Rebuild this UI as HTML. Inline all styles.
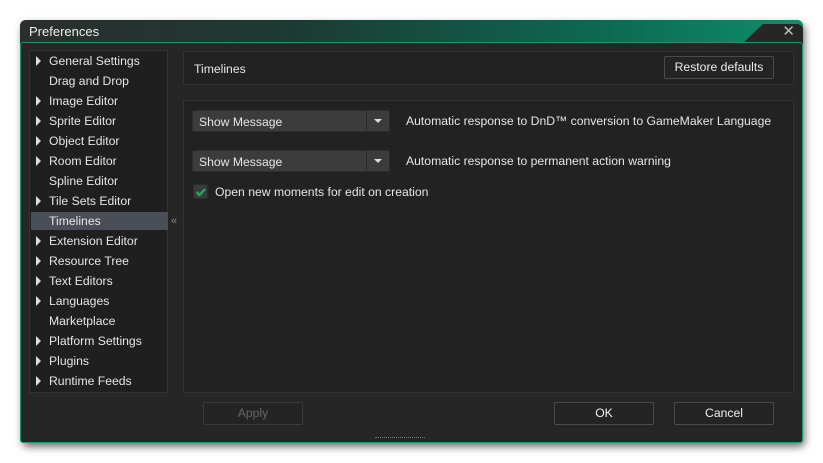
<!DOCTYPE html>
<html><head><style>
body{margin:0;width:823px;height:463px;background:#fff;position:relative;overflow:hidden;font-family:"Liberation Sans",sans-serif;font-size:12.2px;color:#e6e6e6}
.win{position:absolute;left:20px;top:20px;width:783px;height:423px;border-radius:6px;background:#262626;box-shadow:2px 4px 8px rgba(0,0,0,.55)}
.title{position:absolute;left:0;top:0;width:783px;height:23px;border-radius:6px 6px 0 0;background:linear-gradient(90deg,#2b2e2d 0%,#1c3a33 35%,#0d6a51 75%,#0c8f6c 100%)}
.title span{position:absolute;left:9px;top:4px;font-size:13px;color:#eee}
.corner{position:absolute;right:0;top:4px;width:60px;height:19px;background:#262626;clip-path:polygon(20px 0,100% 0,100% 100%,0 100%);border-radius:0 6px 0 0}
.x{position:absolute;right:8px;top:2px;font-size:15px;color:#bbb}
.body{position:absolute;left:0;top:22px;width:781px;height:399px;border:1px solid #1a9a6c;border-radius:3px;background:#262626}
.side{position:absolute;left:29px;top:50px;width:139px;height:343px;background:#1f1f1f;border:1px solid #333;box-sizing:border-box}
.it{position:absolute;left:19px;height:20px;line-height:20px;color:#e6e6e6}
.tri{position:absolute;left:6px;width:0;height:0;border-left:5px solid #ddd;border-top:5px solid transparent;border-bottom:5px solid transparent}
.sel{position:absolute;left:1px;top:161px;width:137px;height:18px;background:#4a4f57}
.panel{position:absolute;background:#222;border:1px solid #333;box-sizing:border-box}
.btn{position:absolute;height:23px;border:1px solid #4a4a4a;border-radius:2px;background:#242424;box-sizing:border-box;text-align:center;line-height:21px;color:#eee}
.dd{position:absolute;left:192px;width:198px;height:22px;background:#3c3c3c;border:1px solid #2e2e2e;box-sizing:border-box;border-radius:2px}
.dd span{position:absolute;left:6px;top:4px}
.dd i{position:absolute;right:0;top:0;width:22px;height:20px;border-left:1px solid #2a2a2a}
.dd i:after{content:"";position:absolute;left:7px;top:8px;border-top:4px solid #ddd;border-left:4px solid transparent;border-right:4px solid transparent}
.lab{position:absolute;left:406px}
</style></head><body>
<div class="win">
<div class="title"><span>Preferences</span></div>
<div class="corner"></div><div class="x">✕</div>
<div class="body"></div>
</div>
<div class="side">
<div class="sel"></div>
<div class="tri" style="top:5px"></div><div class="it" style="top:0">General Settings</div>
<div class="it" style="top:20px">Drag and Drop</div>
<div class="tri" style="top:45px"></div><div class="it" style="top:40px">Image Editor</div>
<div class="tri" style="top:65px"></div><div class="it" style="top:60px">Sprite Editor</div>
<div class="tri" style="top:85px"></div><div class="it" style="top:80px">Object Editor</div>
<div class="tri" style="top:105px"></div><div class="it" style="top:100px">Room Editor</div>
<div class="it" style="top:120px">Spline Editor</div>
<div class="tri" style="top:145px"></div><div class="it" style="top:140px">Tile Sets Editor</div>
<div class="it" style="top:160px">Timelines</div>
<div class="tri" style="top:185px"></div><div class="it" style="top:180px">Extension Editor</div>
<div class="tri" style="top:205px"></div><div class="it" style="top:200px">Resource Tree</div>
<div class="tri" style="top:225px"></div><div class="it" style="top:220px">Text Editors</div>
<div class="tri" style="top:245px"></div><div class="it" style="top:240px">Languages</div>
<div class="it" style="top:260px">Marketplace</div>
<div class="tri" style="top:285px"></div><div class="it" style="top:280px">Platform Settings</div>
<div class="tri" style="top:305px"></div><div class="it" style="top:300px">Plugins</div>
<div class="tri" style="top:325px"></div><div class="it" style="top:320px">Runtime Feeds</div>
</div>
<div style="position:absolute;left:171px;top:215px;color:#888;font-size:11px">«</div>
<div class="panel" style="left:183px;top:51px;width:611px;height:34px"><span style="position:absolute;left:10px;top:10px">Timelines</span></div>
<div class="btn" style="left:664px;top:56px;width:110px">Restore defaults</div>
<div class="panel" style="left:183px;top:100px;width:611px;height:293px"></div>
<div class="dd" style="top:110px"><span>Show Message</span><i></i></div>
<div class="lab" style="top:114px">Automatic response to DnD™ conversion to GameMaker Language</div>
<div class="dd" style="top:150px"><span>Show Message</span><i></i></div>
<div class="lab" style="top:154px">Automatic response to permanent action warning</div>
<div style="position:absolute;left:193px;top:184px;width:15px;height:15px;background:#3a3a3a;border:1px solid #2c2c2c;box-sizing:border-box;border-radius:2px">
<svg width="13" height="13" viewBox="0 0 13 13" style="position:absolute;left:0;top:0"><path d="M2.5 7 L5.5 10 L11 4" stroke="#1fae6a" stroke-width="2.2" fill="none"/></svg></div>
<div style="position:absolute;left:215px;top:185px">Open new moments for edit on creation</div>
<div class="btn" style="left:203px;top:402px;width:100px;color:#666;border-color:#3a3a3a">Apply</div>
<div class="btn" style="left:554px;top:402px;width:100px">OK</div>
<div class="btn" style="left:674px;top:402px;width:100px">Cancel</div>
<div style="position:absolute;left:375px;top:437px;width:50px;height:3px;border-top:1px dotted #777"></div>
</body></html>
